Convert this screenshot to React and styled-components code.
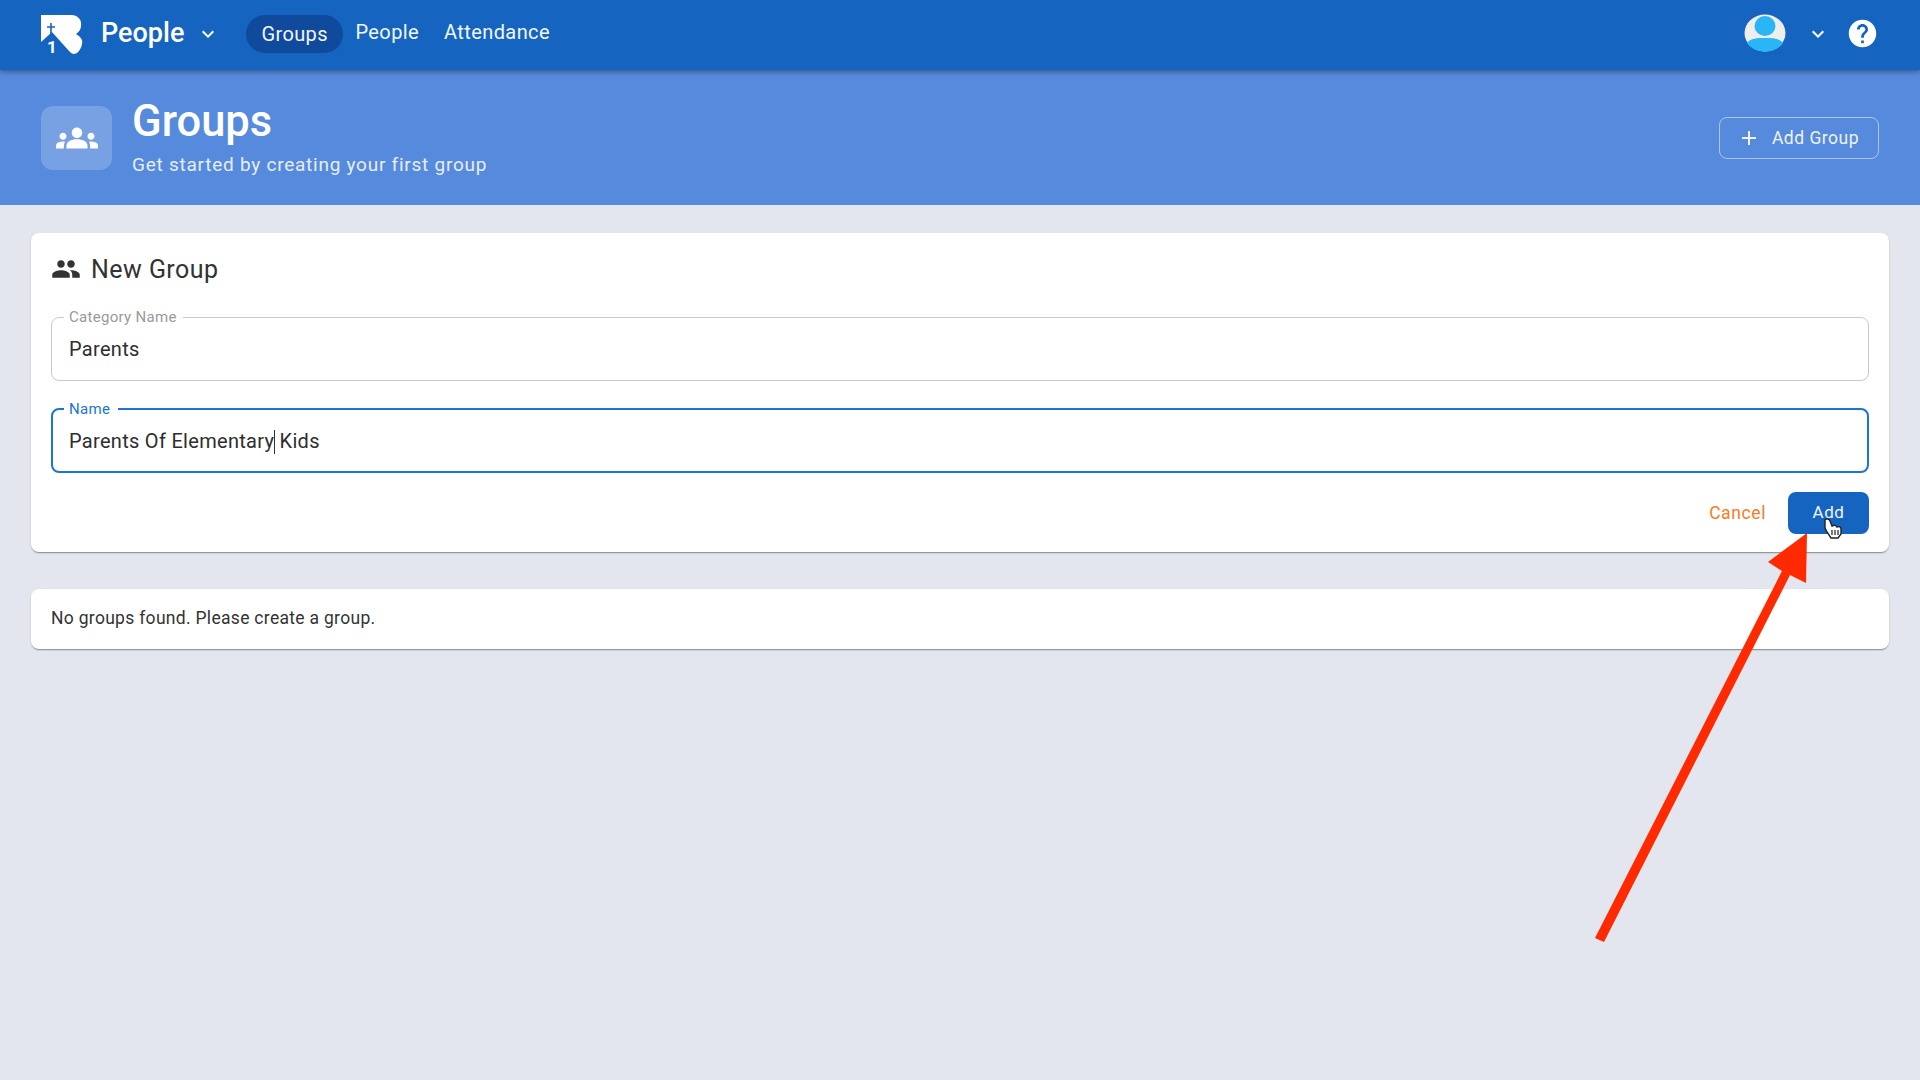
import styled, { createGlobalStyle } from 'styled-components'
import { MdGroup, MdGroups, MdHelp, MdKeyboardArrowDown, MdAdd } from 'react-icons/md'

const GlobalStyle = createGlobalStyle`
  html, body {
    margin: 0;
    padding: 0;
    height: 100%;
    background: #e3e6ee;
    font-family: Roboto, "Liberation Sans", sans-serif;
    overflow: hidden;
  }
  * {
    box-sizing: border-box;
  }
`

const Page = styled.div`
  position: relative;
  width: 1920px;
  height: 1080px;
  background: #e3e6ee;
  overflow: hidden;
`

const TopBar = styled.header`
  position: relative;
  z-index: 2;
  height: 70px;
  padding: 0 41px 4px 41px;
  display: flex;
  align-items: center;
  background: #1565c0;
  color: #fff;
  box-shadow: 0 2px 5px rgba(0, 0, 0, 0.35);
`

const Logo = styled.svg`
  width: 42px;
  height: 44px;
  margin-top: 7px;
`

const AppName = styled.div`
  margin-left: 18px;
  margin-top: -1px;
  font-size: 27px;
  font-weight: 500;
`

const Caret = styled(MdKeyboardArrowDown)`
  font-size: 24px;
  flex-shrink: 0;
`

const AppCaret = styled(Caret)`
  margin: 2px 26px 0 12px;
`

const NavLink = styled.a`
  padding: ${(props) => (props.$active ? '7px 15px' : '7px 12.5px')};
  margin-top: ${(props) => (props.$active ? '1px' : '-3px')};
  border-radius: 20px;
  font-size: 20px;
  letter-spacing: 0.4px;
  color: #f2f6fc;
  background: ${(props) => (props.$active ? '#104a9c' : 'transparent')};
`

const Spacer = styled.div`
  flex: 1;
`

const Avatar = styled.svg`
  width: 42px;
  height: 38px;
`

const UserCaret = styled(Caret)`
  margin: 2px 16px 0 20px;
`

const HelpIcon = styled(MdHelp)`
  font-size: 33px;
`

const SubHeader = styled.section`
  height: 135px;
  padding: 0 41px;
  display: flex;
  align-items: center;
  background: #568adc;
  color: #fff;
`

const IconBox = styled.div`
  width: 71px;
  height: 64px;
  border-radius: 12px;
  display: flex;
  align-items: center;
  justify-content: center;
  background: rgba(255, 255, 255, 0.2);
  font-size: 42px;
`

const Heading = styled.div`
  margin-left: 20px;
  flex: 1;
`

const Title = styled.h1`
  margin: -1px 0 0;
  font-size: 43.5px;
  font-weight: 500;
  line-height: 48px;
`

const Subtitle = styled.p`
  margin: 7px 0 0;
  font-size: 19px;
  line-height: 24px;
  letter-spacing: 0.75px;
  color: #e6eefa;
`

const OutlineButton = styled.button`
  width: 160px;
  height: 42px;
  padding: 0 0 0 2px;
  margin-left: 1px;
  display: flex;
  align-items: center;
  justify-content: center;
  gap: 11px;
  border: 1.5px solid rgba(255, 255, 255, 0.5);
  border-radius: 8px;
  background: transparent;
  color: #eef3fb;
  font-family: inherit;
  font-size: 17.5px;
  letter-spacing: 0.5px;
  svg {
    font-size: 24px;
    margin-left: -4px;
  }
`

const Main = styled.main`
  padding: 28px 31px;
  display: flex;
  flex-direction: column;
  gap: 37px;
`

const Card = styled.div`
  padding: ${(props) => props.$padding};
  border-radius: 8px;
  background: #fff;
  box-shadow: 0 2px 1px -1px rgba(0, 0, 0, 0.25), 0 1px 2px rgba(0, 0, 0, 0.2);
`

const CardTitle = styled.div`
  display: flex;
  align-items: center;
  gap: 10px;
  height: 32px;
  font-size: 25px;
  letter-spacing: 0.45px;
  color: #333;
  svg {
    font-size: 30px;
  }
`

const Field = styled.fieldset`
  margin: ${(props) => props.$top} 0 0;
  padding: 0 ${(props) => (props.$focused ? '16px' : '17px')};
  height: 72px;
  border: ${(props) => (props.$focused ? '2px solid #1976d2' : '1.5px solid #c9c9c9')};
  border-radius: 8px;
  font-size: 20px;
  letter-spacing: 0.3px;
  color: #2e2e2e;
`

const FieldLabel = styled.legend`
  padding: ${(props) => (props.$focused ? '0 8px 0 5px' : '0 6px 0 5px')};
  margin-left: -5px;
  font-size: 15px;
  line-height: 16px;
  letter-spacing: 0.3px;
  color: ${(props) => (props.$focused ? '#1976d2' : '#9a9a9a')};
`

const FieldValue = styled.div`
  line-height: 24px;
  margin-top: 12px;
`

const TextCaret = styled.span`
  display: inline-block;
  width: 1px;
  height: 24px;
  margin-right: -1px;
  vertical-align: -6px;
  background: #333;
`

const Actions = styled.div`
  margin-top: 19px;
  display: flex;
  justify-content: flex-end;
  align-items: center;
  gap: 22px;
`

const CancelButton = styled.button`
  border: 0;
  padding: 0;
  background: none;
  color: #f57c1f;
  font-family: inherit;
  font-size: 17.5px;
  letter-spacing: 0.6px;
`

const AddButton = styled.button`
  width: 81px;
  height: 42px;
  border: 0;
  border-radius: 8px;
  padding: 0 0 2px;
  background: #1565c0;
  color: #f0f5fc;
  font-family: inherit;
  font-size: 17px;
  letter-spacing: 0.6px;
`

const EmptyText = styled.div`
  font-size: 17.5px;
  line-height: 21px;
  letter-spacing: 0.3px;
  color: #333;
`

// annotation drawn over the screenshot
const Overlay = styled.svg`
  position: absolute;
  left: 0;
  top: 0;
  z-index: 3;
  pointer-events: none;
`

function App() {
  return (
    <Page>
      <GlobalStyle />
      <TopBar>
        <Logo viewBox="0 0 42 44">
          <path
            fill="#fff"
            d="M0 0 H30 C38 0 41 6 40 11 C40 14 38 17 35 19 C40 22 42 25 41 29 C40 35 36 39 33 39 C31 39 30 38 28 36 L11 17 L0 27 Z"
          />
          <path stroke="#1565c0" strokeWidth="1.6" d="M10 8 V19 M6 12 H14" fill="none" />
          <text x="6" y="38" fill="#fff" fontSize="17" fontWeight="700" fontFamily="Roboto, sans-serif">
            1
          </text>
        </Logo>
        <AppName>People</AppName>
        <AppCaret />
        <NavLink $active>Groups</NavLink>
        <NavLink>People</NavLink>
        <NavLink>Attendance</NavLink>
        <Spacer />
        <Avatar viewBox="0 0 42 38">
          <ellipse cx="21" cy="19" rx="20.5" ry="18.5" fill="#eeeeee" />
          <ellipse cx="21" cy="12" rx="10.5" ry="10" fill="#29b6f6" />
          <path fill="#29b6f6" d="M3 29 C7 24 13 24 21 24 C29 24 35 24 39 29 C35 35 28 37.5 21 37.5 C14 37.5 7 35 3 29 Z" />
        </Avatar>
        <UserCaret />
        <HelpIcon />
      </TopBar>

      <SubHeader>
        <IconBox>
          <MdGroups />
        </IconBox>
        <Heading>
          <Title>Groups</Title>
          <Subtitle>Get started by creating your first group</Subtitle>
        </Heading>
        <OutlineButton>
          <MdAdd />
          Add Group
        </OutlineButton>
      </SubHeader>

      <Main>
        <Card $padding="20px 20px 18px">
          <CardTitle>
            <MdGroup />
            New Group
          </CardTitle>
          <Field $top="24px">
            <FieldLabel>Category Name</FieldLabel>
            <FieldValue>Parents</FieldValue>
          </Field>
          <Field $top="20px" $focused>
            <FieldLabel $focused>Name</FieldLabel>
            <FieldValue>
              Parents Of Elementary
              <TextCaret /> Kids
            </FieldValue>
          </Field>
          <Actions>
            <CancelButton>Cancel</CancelButton>
            <AddButton>Add</AddButton>
          </Actions>
        </Card>
        <Card $padding="19px 20px 20px">
          <EmptyText>No groups found. Please create a group.</EmptyText>
        </Card>
      </Main>

      <Overlay width="1920" height="1080" viewBox="0 0 1920 1080">
        <polygon
          fill="#ff2a00"
          points="1595,938 1604,942 1790,575 1806,583 1807,533 1768,562 1782,571"
        />
        <path
          fill="#fff"
          stroke="#222"
          strokeWidth="1.4"
          d="M1825 520 C1827 518 1829 519 1830 521 L1832 526 C1834 525 1836 525 1837 527 C1839 526 1841 527 1841 529 L1841 534 L1838 538 H1831 L1827 532 L1825 528 Z"
        />
        <path stroke="#222" strokeWidth="1.2" d="M1832 530 V535 M1835 530 V535 M1838 530 V535" fill="none" />
      </Overlay>
    </Page>
  )
}

export default App
